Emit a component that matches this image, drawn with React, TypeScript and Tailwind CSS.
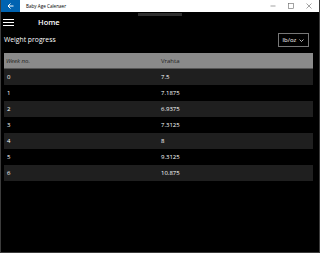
import React from 'react';

const rows = [
  ['0', '7.5'],
  ['1', '7.1875'],
  ['2', '6.9375'],
  ['3', '7.3125'],
  ['4', '8'],
  ['5', '9.3125'],
  ['6', '10.875'],
];

const App = () => {
  return (
    <div className="w-[320px] h-[253px] bg-black flex flex-col overflow-hidden border-x border-b border-[#3c3c3c] font-['Open_Sans',sans-serif] text-white">
      {/* Title bar */}
      <div className="h-[12px] bg-white flex items-center shrink-0">
        <div className="w-[19px] h-full bg-[#0063b1] flex items-center justify-center">
          <svg width="7" height="6" viewBox="0 0 7 6" fill="none" stroke="white" strokeWidth="1">
            <path d="M3.5 0.5 L1 3 L3.5 5.5 M1 3 H6.5" />
          </svg>
        </div>
        <span className="ml-[6px] text-[4.6px] text-black leading-none">Baby Age Calenaer</span>
        <div className="flex-1" />
        <div className="flex items-center gap-[12px] mr-[7px]">
          <svg width="6" height="6" viewBox="0 0 6 6" stroke="#666" strokeWidth="0.6">
            <path d="M0.5 3 H5.5" />
          </svg>
          <svg width="6" height="6" viewBox="0 0 6 6" fill="none" stroke="#666" strokeWidth="0.6">
            <rect x="0.5" y="0.5" width="5" height="5" />
          </svg>
          <svg width="6" height="6" viewBox="0 0 6 6" stroke="#666" strokeWidth="0.6">
            <path d="M0.5 0.5 L5.5 5.5 M5.5 0.5 L0.5 5.5" />
          </svg>
        </div>
      </div>

      {/* Scroll indicator */}
      <div className="h-[4px] shrink-0 flex">
        <div className="ml-[137px] mt-[1px] w-[44px] h-[3px] bg-[#2e2e2e]" />
      </div>

      {/* Nav */}
      <div className="h-[13px] shrink-0 flex items-center">
        <div className="ml-[2px] w-[11px] flex flex-col gap-[2px]">
          <div className="h-[1px] bg-white" />
          <div className="h-[1px] bg-white" />
          <div className="h-[1px] bg-white" />
        </div>
        <span className="ml-[24px] text-[7.5px] font-semibold leading-none">Home</span>
      </div>

      {/* Options row */}
      <div className="mt-[4px] h-[14px] shrink-0 flex items-center justify-between pl-[3px] pr-[10px]">
        <span className="text-[6.8px] leading-none">Weight progress</span>
        <div className="w-[31px] h-full border border-[#777] flex items-center justify-center gap-[3px]">
          <span className="text-[6px] leading-none">lb/oz</span>
          <svg width="5" height="3" viewBox="0 0 5 3" fill="none" stroke="white" strokeWidth="0.7">
            <path d="M0.5 0.5 L2.5 2.5 L4.5 0.5" />
          </svg>
        </div>
      </div>

      {/* Table */}
      <div className="mt-[6px] ml-[3px] w-[309px] flex flex-col text-[6px] leading-none">
        <div className="h-[16px] bg-[#8a8a8a] grid grid-cols-[157px_1fr] items-center text-[#222] border-b border-[#555]">
          <span className="pl-[2px] italic">Week no.</span>
          <span>Vrahta</span>
        </div>
        {rows.map(([w, v], i) => (
          <div
            key={w}
            className={`h-[16px] grid grid-cols-[157px_1fr] items-center ${i % 2 === 0 ? 'bg-[#1f1f1f]' : 'bg-black'}`}
          >
            <span className="pl-[3px]">{w}</span>
            <span>{v}</span>
          </div>
        ))}
      </div>
    </div>
  );
};

export default App;
